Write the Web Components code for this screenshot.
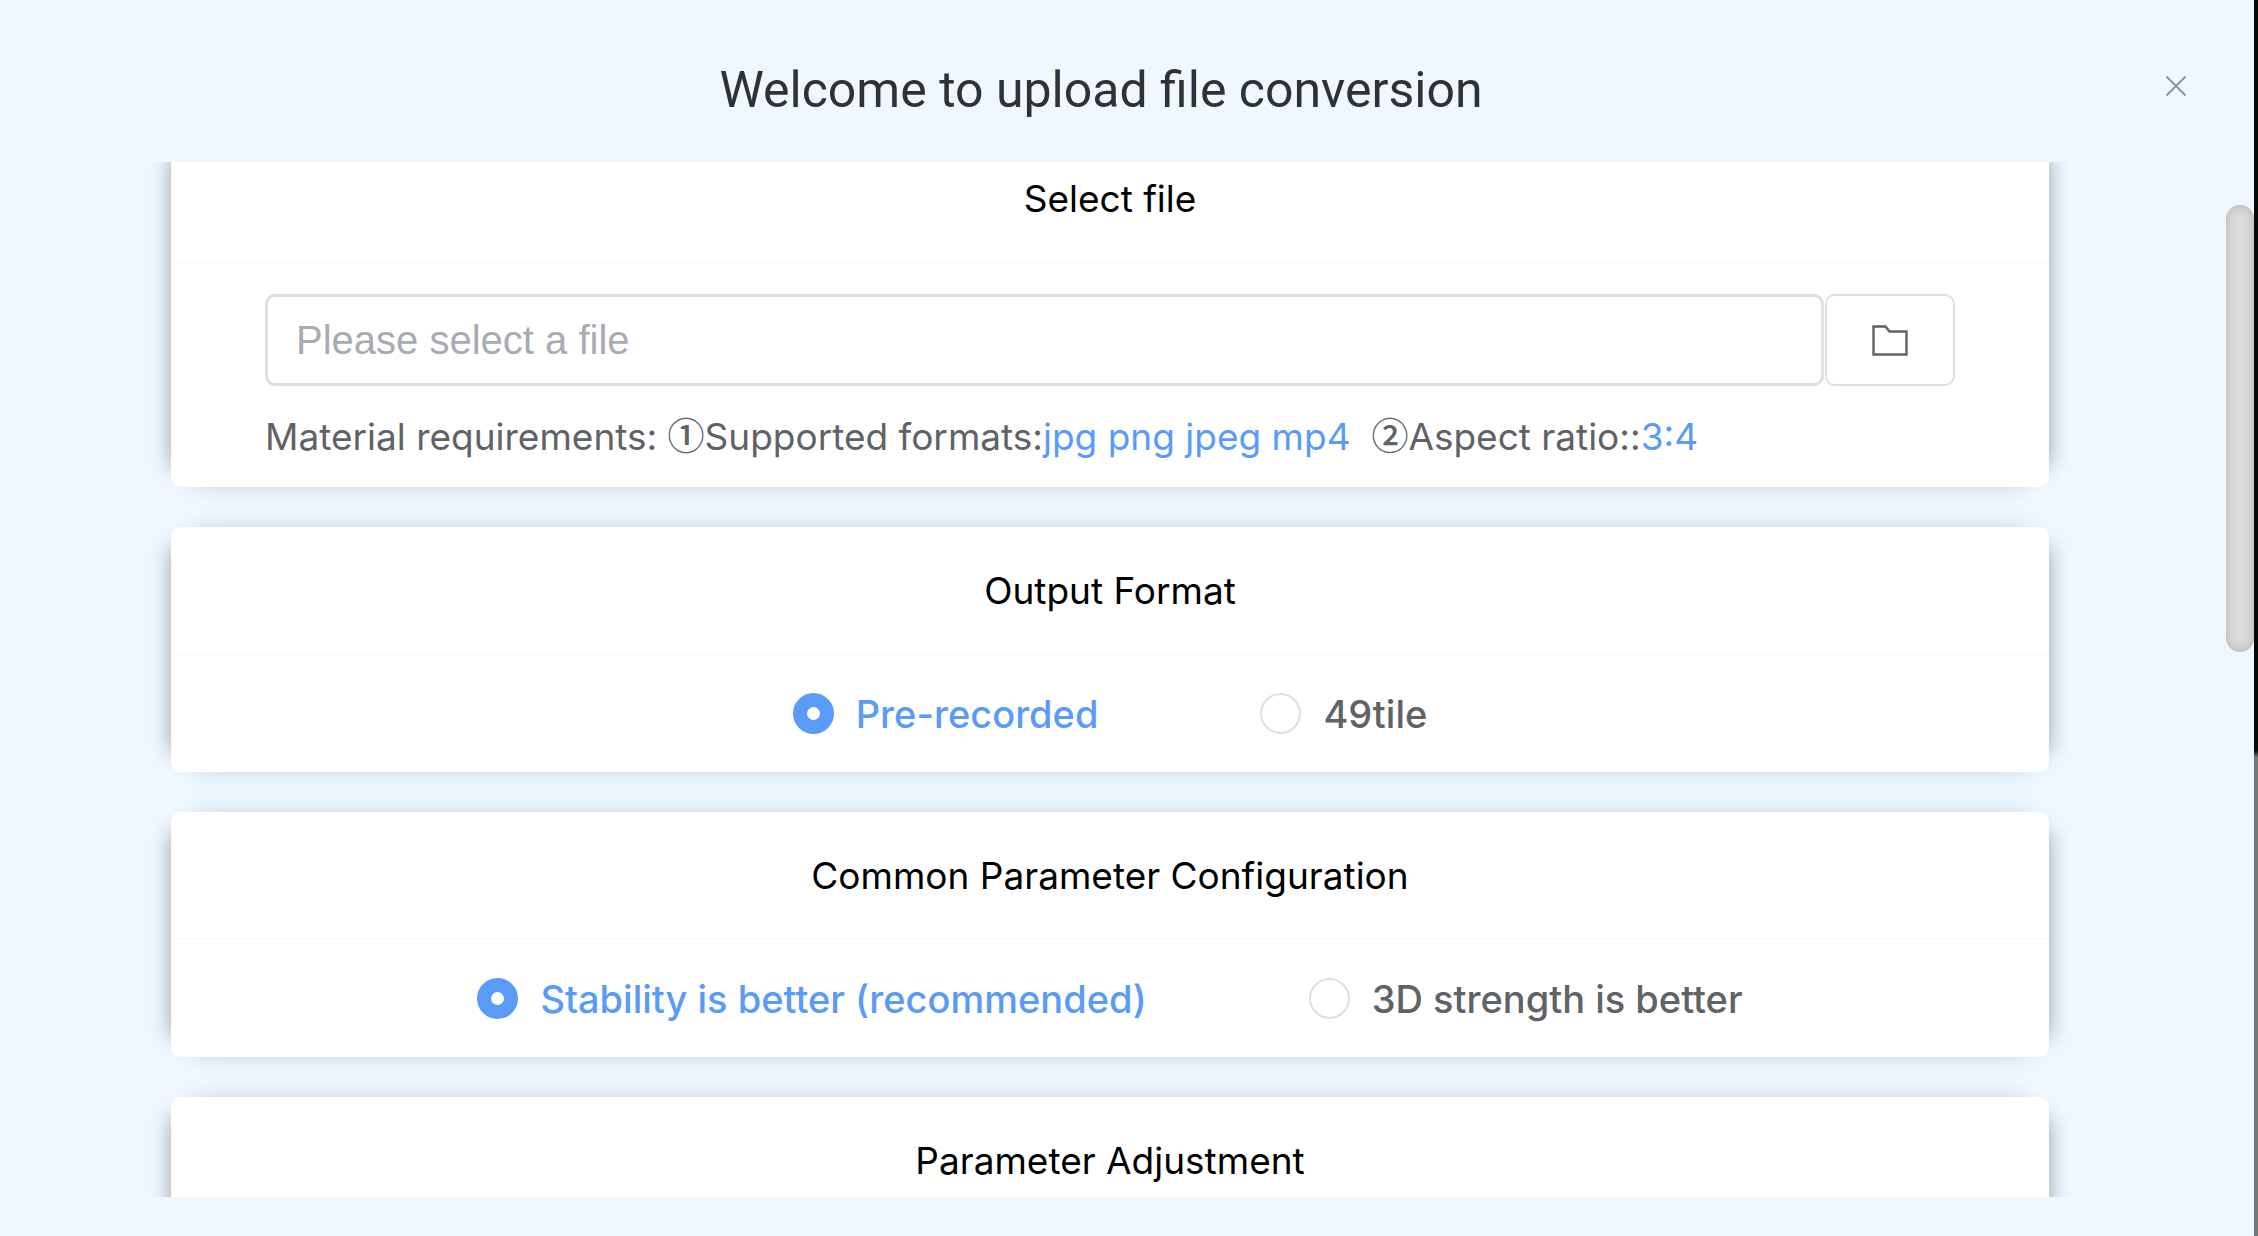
<!DOCTYPE html>
<html lang="en">
<head>
<meta charset="utf-8">
<title>Upload file conversion</title>
<style>
  html, body { margin: 0; height: 100%; }
  body {
    overflow: hidden;
    font-family: Inter, "Liberation Sans", sans-serif;
    font-size: 38px;
    color: #606266;
    background: #f0f8ff;
  }
</style>
</head>
<body>
<upload-dialog heading="Welcome to upload file conversion">
  <option-card heading="Select file">
    <file-picker placeholder="Please select a file"></file-picker>
    <material-note></material-note>
  </option-card>
  <option-card heading="Output Format">
    <radio-choices name="format" options="Pre-recorded|49tile"></radio-choices>
  </option-card>
  <option-card heading="Common Parameter Configuration">
    <radio-choices name="common" options="Stability is better (recommended)|3D strength is better"></radio-choices>
  </option-card>
  <option-card heading="Parameter Adjustment"></option-card>
</upload-dialog>

<script>
class UploadDialog extends HTMLElement {
  connectedCallback() {
    const root = this.attachShadow({ mode: "open" });
    root.innerHTML = `
      <style>
        :host { display: grid; grid-template-columns: minmax(0, 1fr) 4px; height: 100vh; }
        .panel { display: flex; flex-direction: column; min-height: 0; height: 100vh; position: relative; }
        header {
          display: grid; grid-template-columns: 1fr auto 1fr; align-items: center;
          flex: none; height: 162px; padding: 10px 52px 0 0; box-sizing: border-box;
        }
        h1 {
          grid-column: 2; margin: 0; padding-top: 8px; font-family: Roboto, sans-serif;
          font-size: 50px; line-height: 64px; font-weight: 400; color: #303133;
        }
        button {
          justify-self: end; width: 52px; height: 52px; padding: 0; border: 0;
          background: none; display: grid; place-items: center; color: #909399;
        }
        main {
          flex: 1; min-height: 0; overflow: hidden; margin-bottom: 39px;
          padding: 0 205px 0 171px; display: flex; flex-direction: column; gap: 40px;
        }
        .thumb {
          position: absolute; right: 0; top: 205px; width: 28px; height: 447px; border-radius: 14px;
          background: #dddddd; box-shadow: inset 0 0 12px rgba(0, 0, 0, .2);
        }
        .edge { background: linear-gradient(#0a0806 60.7%, #777 61.3%); }
      </style>
      <div class="panel">
        <header>
          <h1></h1>
          <button type="button" aria-label="Close">
            <svg width="22" height="22" viewBox="0 0 22 22" fill="none" stroke="currentColor" stroke-width="2"><path d="M1.5 1.5l19 19M20.5 1.5l-19 19"/></svg>
          </button>
        </header>
        <main><slot></slot></main>
        <div class="thumb"></div>
      </div>
      <div class="edge"></div>`;
    root.querySelector("h1").textContent = this.getAttribute("heading");
  }
  scrollContent(y) { this.shadowRoot.querySelector("main").scrollTop = y; }
}

class OptionCard extends HTMLElement {
  connectedCallback() {
    const root = this.attachShadow({ mode: "open" });
    root.innerHTML = `
      <style>
        :host {
          display: block; flex: none; background: #fff; border-radius: 10px;
          box-shadow:
            -20px 0 20px -20px rgba(0, 0, 0, .36), 20px 0 20px -20px rgba(0, 0, 0, .36),
            0 -22px 22px -22px rgba(0, 0, 0, .12), 0 22px 22px -22px rgba(0, 0, 0, .12);
        }
        h2 {
          margin: 0; padding: 39px 0 37px; font-size: 37px; line-height: 50px; font-weight: 400;
          color: #000; text-align: center; border-bottom: 2px solid #f4fdff;
        }
        .body { min-height: 117px; padding: 0 94px; }
      </style>
      <h2></h2>
      <div class="body"><slot></slot></div>`;
    root.querySelector("h2").textContent = this.getAttribute("heading");
  }
}

class FilePicker extends HTMLElement {
  connectedCallback() {
    const root = this.attachShadow({ mode: "open" });
    root.innerHTML = `
      <style>
        :host { display: flex; gap: 1px; padding-top: 31px; }
        input, button { box-sizing: border-box; height: 92px; border-radius: 10px; background: #fff; }
        input {
          flex: 1; min-width: 0; border: 3px solid #dcdfe6; padding: 0 28px; outline: 0;
          font: 40px "Liberation Sans", sans-serif; color: #606266;
        }
        input::placeholder { color: #a8abb2; opacity: 1; }
        button { flex: none; width: 130px; padding: 0; border: 2px solid #dcdfe6; display: grid; place-items: center; color: #606266; }
      </style>
      <input type="text" aria-label="File">
      <button type="button" aria-label="Browse">
        <svg width="36" height="31" viewBox="0 0 36 31" fill="none" stroke="currentColor" stroke-width="2.4"><path d="M1.5 1.5H13.5L17.5 6.5H34.500V29.500H1.5Z"/></svg>
      </button>`;
    root.querySelector("input").placeholder = this.getAttribute("placeholder");
  }
}

class MaterialNote extends HTMLElement {
  connectedCallback() {
    const root = this.attachShadow({ mode: "open" });
    root.innerHTML = `
      <style>
        :host { display: block; padding: 26px 0 25px; }
        p { margin: 0; font-size: 37px; line-height: 50px; height: 50px; white-space: pre; }
        b { font-weight: 400; color: #5b9bf8; }
        i { font: 500 37px/1 "Noto Sans CJK SC", sans-serif; }
      </style>
      <p>Material requirements: <i>①</i>Supported formats:<b>jpg png jpeg mp4</b>  <i>②</i>Aspect ratio::<b>3:4</b></p>`;
  }
}

class RadioChoices extends HTMLElement {
  connectedCallback() {
    const root = this.attachShadow({ mode: "open" });
    const name = this.getAttribute("name");
    root.innerHTML = `
      <style>
        :host { display: flex; justify-content: center; align-items: center; gap: 162px; height: 117px; }
        label { display: flex; align-items: center; gap: 22px; font-weight: 500; line-height: 50px; }
        input {
          appearance: none; box-sizing: border-box; width: 41px; height: 41px; margin: 0;
          border: 2px solid #dcdfe6; border-radius: 50%; background: #fff;
        }
        input:checked { border: 14px solid #5b9bf8; }
        input:checked + span { color: #5b9bf8; }
      </style>` +
      this.getAttribute("options").split("|").map((text, i) =>
        `<label><input type="radio" name="${name}"${i ? "" : " checked"}><span>${text}</span></label>`).join("");
  }
}

customElements.define("option-card", OptionCard);
customElements.define("file-picker", FilePicker);
customElements.define("material-note", MaterialNote);
customElements.define("radio-choices", RadioChoices);
customElements.define("upload-dialog", UploadDialog);
document.querySelector("upload-dialog").scrollContent(27);
</script>
</body>
</html>
